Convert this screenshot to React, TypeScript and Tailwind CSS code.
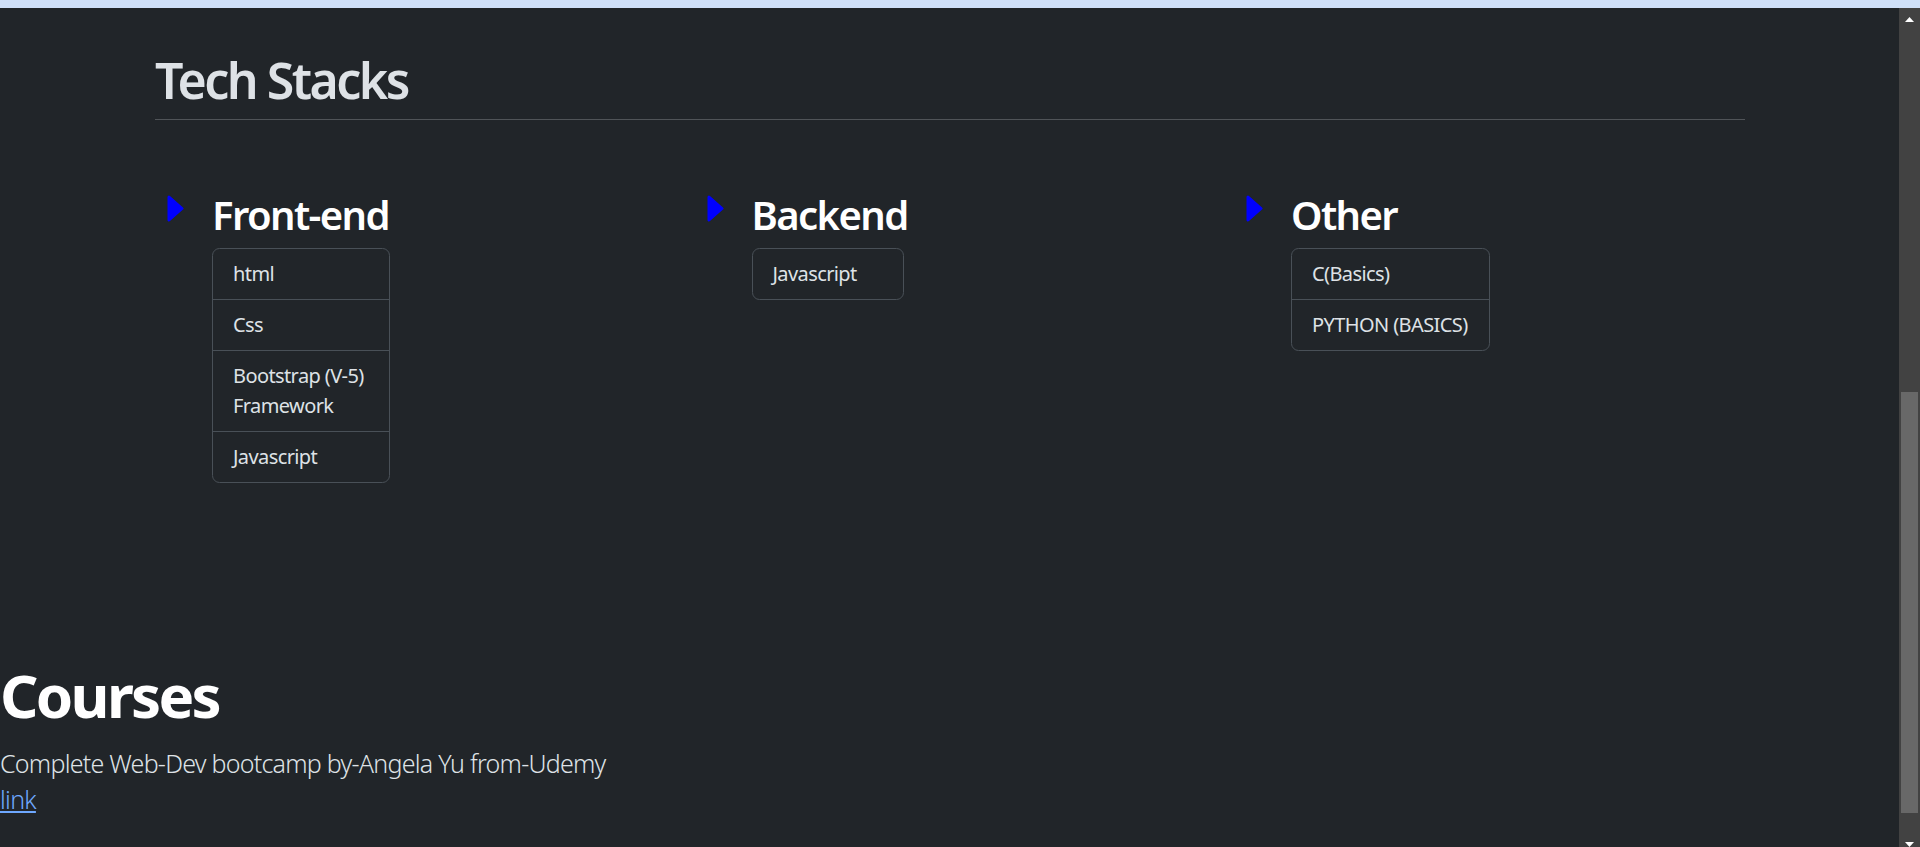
import React from "react";

const stacks = [
  { title: "Front-end", width: "w-[178px]", items: ["html", "Css", "Bootstrap (V-5) Framework", "Javascript"] },
  { title: "Backend", width: "w-[152px]", items: ["Javascript"] },
  { title: "Other", width: "w-[199px]", items: ["C(Basics)", "PYTHON (BASICS)"] },
];

function Caret() {
  return (
    <svg className="mt-[4.5px] w-[17px] h-[27px] shrink-0" viewBox="0 0 17 27">
      <polygon
        points="2,2 15,13.5 2,25"
        fill="#0000ff"
        stroke="#0000ff"
        strokeWidth={3}
        strokeLinejoin="round"
      />
    </svg>
  );
}

function StackColumn({ title, width, items }: { title: string; width: string; items: string[] }) {
  return (
    <div className="flex items-start">
      <Caret />
      <div className="ml-[28px]">
        <h2 className="text-[40px] leading-[48px] font-semibold text-white tracking-[-0.04em] mb-[9.5px]">
          {title}
        </h2>
        <ul className={`${width} border border-[#495057] rounded-[7.5px]`}>
          {items.map((item, i) => (
            <li
              key={item}
              className={`px-[20px] py-[10px] text-[20px] leading-[30px] tracking-[-0.03em] ${
                i > 0 ? "border-t border-[#495057]" : ""
              }`}
            >
              {item}
            </li>
          ))}
        </ul>
      </div>
    </div>
  );
}

function Scrollbar() {
  return (
    <div className="w-[21px] shrink-0 bg-[#424242] flex flex-col items-center">
      <svg className="mt-[9px] w-[9px] h-[5px]" viewBox="0 0 9 5">
        <polygon points="4.5,0 9,5 0,5" fill="#ffffff" />
      </svg>
      <div className="mt-[370px] w-[17px] h-[421px] bg-[#686868]" />
      <svg className="mt-[29px] w-[9px] h-[5px]" viewBox="0 0 9 5">
        <polygon points="0,0 9,0 4.5,5" fill="#ffffff" />
      </svg>
    </div>
  );
}

export default function App() {
  return (
    <div className="h-[847px] w-[1920px] overflow-hidden bg-[#212529] font-['Noto_Sans',sans-serif] text-[#dee2e6] flex flex-col">
      <div className="h-[8px] shrink-0 bg-[#cfe0f8]" />
      <div className="flex flex-1 min-h-0">
        <main className="flex-1 min-w-0">
          <section className="pl-[155px] pr-[154px]">
            <h1 className="mt-[42px] text-[50px] leading-[60px] font-semibold tracking-[-0.05em]">Tech Stacks</h1>
            <div className="mt-[9px] h-px bg-[#505458]" />
          </section>

          <div className="mt-[70.5px] pl-[167px] grid grid-cols-[539.5px_539.5px_539.5px]">
            {stacks.map((s) => (
              <StackColumn key={s.title} {...s} />
            ))}
          </div>

          <section className="mt-[176px]">
            <h1 className="text-[60px] leading-[72px] font-bold text-white tracking-[-0.045em]">Courses</h1>
            <p className="mt-[13.6px] text-[25px] leading-[36px] font-light tracking-[-0.03em]">
              Complete Web-Dev bootcamp by-Angela Yu from-Udemy
            </p>
            <a href="#" className="block w-fit text-[25px] leading-[36px] font-light tracking-[-0.03em] text-[#6ea8fe] underline">
              link
            </a>
          </section>
        </main>
        <Scrollbar />
      </div>
    </div>
  );
}
